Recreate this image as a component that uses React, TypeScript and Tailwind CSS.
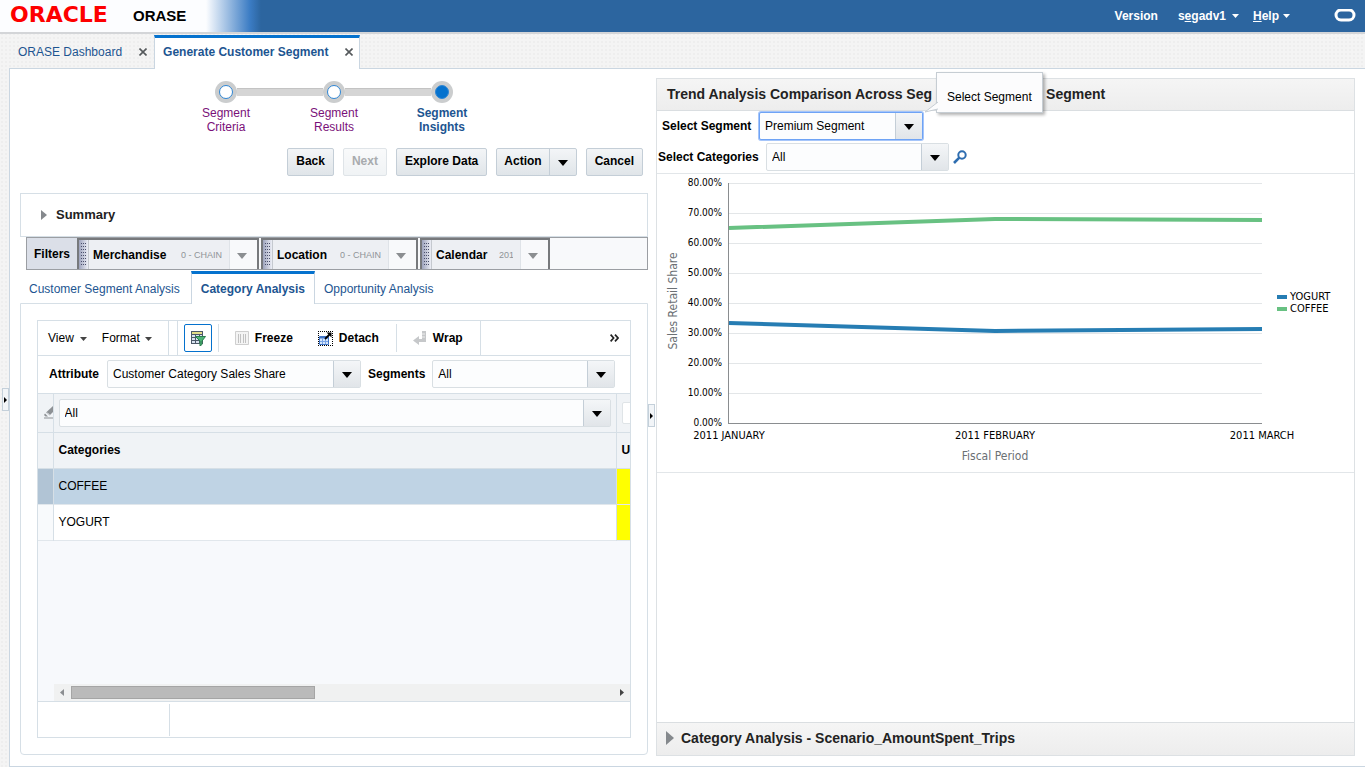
import type { ReactNode } from "react";
import clsx from "clsx";

const steps = [
  { label: ["Segment", "Criteria"], current: false },
  { label: ["Segment", "Results"], current: false },
  { label: ["Segment", "Insights"], current: true },
];

const filters = [
  { name: "Merchandise", value: "0 - CHAIN", width: "w-[182px]", clip: "" },
  { name: "Location", value: "0 - CHAIN", width: "w-[157px]", clip: "" },
  { name: "Calendar", value: "2011", width: "w-[130px]", clip: "w-[14px]" },
];

const rows = [
  { name: "COFFEE", selected: true },
  { name: "YOGURT", selected: false },
];

const series = [
  { name: "YOGURT", color: "#267db3", points: "72,149 338,157 605,155" },
  { name: "COFFEE", color: "#68c182", points: "72,54 338,45 605,46" },
];

const ticks = [80, 70, 60, 50, 40, 30, 20, 10, 0];

const months = [
  { x: 72, label: "2011 JANUARY" },
  { x: 338, label: "2011 FEBRUARY" },
  { x: 605, label: "2011 MARCH" },
];

const Caret = ({ className = "" }: { className?: string }) => (
  <svg
    width="10"
    height="6"
    viewBox="0 0 10 6"
    fill="currentColor"
    className={clsx("shrink-0", className)}
  >
    <path d="M0 0h10L5 6z" />
  </svg>
);

const SmallCaret = ({ className = "" }: { className?: string }) => (
  <svg
    width="7"
    height="4"
    viewBox="0 0 7 4"
    fill="currentColor"
    className={clsx("shrink-0", className)}
  >
    <path d="M0 0h7L3.5 4z" />
  </svg>
);

const RightArrow = ({ className = "" }: { className?: string }) => (
  <svg
    viewBox="0 0 6 10"
    fill="currentColor"
    preserveAspectRatio="none"
    className={clsx("shrink-0", className)}
  >
    <path d="M0 0l6 5-6 5z" />
  </svg>
);

type SelectProps = {
  id: string;
  value: string;
  className?: string;
  focused?: boolean;
  label?: string;
};

const Select = ({ id, value, className, focused, label }: SelectProps) => (
  <div
    className={clsx(
      "relative h-7 rounded-xs border bg-[#fcfdfe]",
      focused ? "border-[#6ea3f5] ring-1 ring-[#a5c5fa]" : "border-[#d9dfe3]",
      className
    )}
  >
    <select
      id={id}
      aria-label={label}
      className="block h-full w-full appearance-none bg-transparent pr-8 pl-[5px] outline-none"
    >
      <option>{value}</option>
    </select>
    <span className="pointer-events-none absolute inset-y-0 right-0 flex w-[27px] items-center justify-center border-l border-[#c4ced7] bg-linear-to-b from-[#f4f6f8] to-[#e1e5e9]">
      <Caret className="mt-0.5" />
    </span>
  </div>
);

const Button = ({
  children,
  disabled,
}: {
  children: ReactNode;
  disabled?: boolean;
}) => (
  <button
    disabled={disabled}
    className="h-7 rounded-xs border border-[#c4ced7] bg-linear-to-b from-[#f3f5f7] to-[#e0e5e9] px-2 pb-0.5 font-bold disabled:border-[#dfe4e8] disabled:from-[#f9fafb] disabled:to-[#f0f3f5] disabled:text-[#a8abae]"
  >
    {children}
  </button>
);

const Header = () => (
  <header className="flex h-[34px] items-center border-b-2 border-[#d3d5d8] bg-[linear-gradient(90deg,#fcfdff_0,#fcfdff_206px,#3b7cc4_250px,#2c659f_261px)] pr-[9px] pl-[10px] font-bold">
    <span className="w-[123px] pb-0.5 font-['DejaVu_Sans'] text-[22px] leading-none text-[#fe0000]">
      ORACLE
    </span>
    <h1 className="text-[15px]">ORASE</h1>
    <nav className="ml-auto flex items-center text-white">
      <a href="#version">Version</a>
      <button className="ml-5 flex items-center gap-1.5">
        <span>
          s<u>e</u>gadv1
        </span>
        <SmallCaret />
      </button>
      <button className="ml-[14px] flex items-center gap-1">
        <span>
          <u>H</u>elp
        </span>
        <SmallCaret />
      </button>
      <svg width="22" height="14" viewBox="0 0 22 14" className="ml-11">
        <rect
          x="2"
          y="1"
          width="18"
          height="10"
          rx="5"
          fill="none"
          stroke="white"
          strokeWidth="3"
        />
      </svg>
    </nav>
  </header>
);

const CloseIcon = () => (
  <svg width="8" height="8" viewBox="0 0 8 8" stroke="#55595c" strokeWidth="1.6">
    <path d="M.5.5l7 7M7.5.5l-7 7" />
  </svg>
);

const PageTabs = () => (
  <div className="relative z-10 -mb-px flex h-[35px] pt-px pl-[10px] text-[#1d5591]">
    <div className="flex items-center gap-[17px] pr-[7px] pl-2">
      <a href="#dashboard">ORASE Dashboard</a>
      <button aria-label="Close ORASE Dashboard">
        <CloseIcon />
      </button>
    </div>
    <div className="flex items-center gap-[17px] border-x border-t-3 border-x-[#cad6e1] border-t-[#0572ce] bg-white pr-1.5 pb-[3px] pl-2 font-bold">
      <a href="#segment">Generate Customer Segment</a>
      <button aria-label="Close Generate Customer Segment">
        <CloseIcon />
      </button>
    </div>
  </div>
);

const Train = () => (
  <ol className="flex justify-center pt-3 leading-[14px]">
    {steps.map((step, i) => (
      <li key={step.label[1]} className="w-[108px]">
        <div className="flex h-[22px] items-center">
          <span
            className={clsx(
              "h-2 flex-1",
              i > 0 && "border-t border-[#c3c3c3] bg-[#d5d5d5]"
            )}
          />
          <span className="flex size-[22px] items-center justify-center rounded-full bg-[#cbcdce]">
            <span
              className={clsx(
                "size-[14px] rounded-full border border-[#2f86d4]",
                step.current ? "bg-[#0572ce]" : "bg-white"
              )}
            />
          </span>
          <span
            className={clsx(
              "h-2 flex-1",
              i < steps.length - 1 && "border-t border-[#c3c3c3] bg-[#d5d5d5]"
            )}
          />
        </div>
        <a
          href={`#${step.label[1].toLowerCase()}`}
          className={clsx(
            "mt-[3px] block text-center",
            step.current ? "font-bold text-[#1d5591]" : "text-[#7a1079]"
          )}
        >
          {step.label[0]}
          <br />
          {step.label[1]}
        </a>
      </li>
    ))}
  </ol>
);

const Actions = () => (
  <div className="mt-[14px] mr-[5px] flex justify-end gap-[9px]">
    <Button>Back</Button>
    <Button disabled>Next</Button>
    <Button>Explore Data</Button>
    <div className="flex h-7 rounded-xs border border-[#c4ced7] bg-linear-to-b from-[#f3f5f7] to-[#e0e5e9] font-bold">
      <button className="px-[7px] pb-0.5">Action</button>
      <button
        aria-label="More actions"
        className="flex w-[27px] items-center justify-center border-l border-[#c4ced7]"
      >
        <Caret className="mt-0.5" />
      </button>
    </div>
    <Button>Cancel</Button>
  </div>
);

const Filters = () => (
  <div className="ml-1.5 flex h-[33px] gap-0.5 border border-[#9b9ea3] bg-[#f8f9fb]">
    <div className="-mr-0.5 flex w-[50px] items-center justify-center bg-[#dbdfe8] font-bold">
      Filters
    </div>
    {filters.map((filter) => (
      <div
        key={filter.name}
        className={clsx(
          "flex items-center border-x-2 border-t-2 border-[#77797c] bg-[#edeff3]",
          filter.width
        )}
      >
        <span className="mr-1 flex h-full w-[10px] items-center border-r border-[#c5c9cf] bg-linear-to-r from-[#9ea4bd] to-[#eceef5]">
          <svg width="8" height="24" viewBox="0 0 8 24">
            <defs>
              <pattern id="grip" width="2" height="3" patternUnits="userSpaceOnUse">
                <rect width="1" height="1" fill="#4b506c" />
              </pattern>
            </defs>
            <rect x="1" width="6" height="24" fill="url(#grip)" />
          </svg>
        </span>
        <b>{filter.name}</b>
        <span
          className={clsx(
            "mr-[7px] ml-auto overflow-hidden text-[9px] whitespace-nowrap text-[#8f9397]",
            filter.clip
          )}
        >
          {filter.value}
        </span>
        <button
          aria-label={`${filter.name} level`}
          className="flex h-full w-7 items-center border-l border-[#dfe3e8] bg-[#f8f9fb] pl-[7px] text-[#8b8e91]"
        >
          <Caret className="mt-0.5" />
        </button>
      </div>
    ))}
  </div>
);

const QueryIcon = () => (
  <svg width="16" height="16" viewBox="0 0 16 16">
    <path d="M1 1h12v13H1z" fill="#4c5868" />
    <path d="M2 2h10v2H2z" fill="#e3dc88" />
    <path
      d="M2 5h3v2H2zM6 5h3v2H6zM10 5h2v2h-2zM2 8h3v2H2zM6 8h3v2H6zM2 11h3v2H2zM6 11h3v2H6z"
      fill="#d9e2ef"
    />
    <path d="M5.5 6.5h10L12 11v3.5l-2 1.5v-5z" fill="#4fb477" stroke="#2b7d4d" />
  </svg>
);

const FreezeIcon = () => (
  <svg width="14" height="14" viewBox="0 0 14 14">
    <path d="M.5.5h13v13H.5z" fill="#f4f4f4" stroke="#cfcfcf" />
    <path d="M3.5 3v9M5.5 3v9M8.5 3v9M10.5 3v9" stroke="#c2c2c2" />
  </svg>
);

const DetachIcon = () => (
  <svg width="15" height="15" viewBox="0 0 15 15">
    <path
      d="M0 .5h15M0 14.5h15M.5 0v15M14.5 0v15"
      stroke="#000"
      strokeDasharray="1 1"
    />
    <path d="M1.5 5.5h9v8h-9z" fill="#d5e6fb" stroke="#3f74c8" />
    <path d="M2 6h8v1.5H2z" fill="#3f74c8" />
    <path d="M4.5 7v6M7.5 7v6M2 10.5h8" stroke="#7ba5e6" />
    <path d="M7 8l5-5" stroke="#000" strokeWidth="1.8" />
    <path d="M8.5 1.5h5v5z" />
  </svg>
);

const WrapIcon = () => (
  <svg width="14" height="14" viewBox="0 0 14 14" fill="#c6c8ca">
    <path d="M9 0h4v11H6v3L0 9.5 6 5v3h3z" />
    <path d="M9 3h3M9 6h3" stroke="#eee" />
  </svg>
);

const ClearIcon = () => (
  <svg width="9" height="13" viewBox="0 0 9 13" className="block">
    <path d="M9 0v6L5.5 9.5 2 6.5z" fill="#8d9195" />
    <path d="M1 7.5l3 3H1.5L0 9z" fill="#8d9195" />
    <path d="M3 6.5l3 3" stroke="#eff2f5" />
    <path d="M0 12h9" stroke="#8d9195" />
  </svg>
);

const Toolbar = () => (
  <div className="flex h-[35px] items-center border-b border-[#d6dfe6]">
    <button className="ml-[10px] flex items-center gap-1.5">
      View <SmallCaret className="mt-0.5 text-[#444]" />
    </button>
    <button className="mr-4 ml-[15px] flex items-center gap-[5px]">
      Format <SmallCaret className="mt-0.5 text-[#444]" />
    </button>
    <span className="mr-1.5 h-full w-[10px] border-x border-[#d6dfe6]" />
    <button
      aria-label="Query by example"
      aria-pressed="true"
      className="flex size-7 items-center justify-center rounded-xs border border-[#0572ce]"
    >
      <QueryIcon />
    </button>
    <span className="ml-1.5 h-7 border-l border-[#d6dfe6]" />
    <button className="ml-4 flex items-center gap-1.5 font-bold">
      <FreezeIcon /> Freeze
    </button>
    <button className="ml-[25px] flex items-center gap-1.5 font-bold">
      <DetachIcon /> Detach
    </button>
    <span className="ml-[17px] h-7 border-l border-[#d6dfe6]" />
    <button className="ml-4 flex items-center gap-1.5 font-bold">
      <WrapIcon /> Wrap
    </button>
    <span className="ml-[17px] h-full border-l border-[#d6dfe6]" />
    <button aria-label="More tools" className="mr-[11px] ml-auto">
      <svg
        width="9"
        height="8"
        viewBox="0 0 9 8"
        fill="none"
        stroke="#222"
        strokeWidth="1.7"
      >
        <path d="M.6.6L3.6 4l-3 3.4M5 .6L8 4 5 7.4" />
      </svg>
    </button>
  </div>
);

const CategoryTable = () => (
  <table className="w-full table-fixed border-collapse text-left">
    <colgroup>
      <col className="w-[15px]" />
      <col />
      <col className="w-[14px]" />
    </colgroup>
    <thead className="bg-[#f0f3f6]">
      <tr className="h-[38px] border-b border-[#d6dfe6]">
        <td className="overflow-hidden border-r border-[#d6dfe6] pl-1.5">
          <ClearIcon />
        </td>
        <td className="border-r border-[#d6dfe6] px-[5px]">
          <Select id="category-filter" label="Filter categories" value="All" />
        </td>
        <td className="overflow-hidden pl-[5px]">
          <input
            aria-label="Filter"
            className="block h-[22px] w-20 rounded-xs border border-[#dfe4e7] bg-white"
          />
        </td>
      </tr>
      <tr className="h-9 border-b border-[#d6dfe6]">
        <td className="border-r border-[#d6dfe6]" />
        <th className="border-r border-[#d6dfe6] px-[5px]">Categories</th>
        <th className="overflow-hidden pl-[5px]">U</th>
      </tr>
    </thead>
    <tbody>
      {rows.map((row) => (
        <tr
          key={row.name}
          className={clsx(
            "h-9 border-b border-[#e1e7ec]",
            row.selected ? "bg-[#bfd3e4]" : "bg-white"
          )}
        >
          <td
            className={clsx(
              "border-r border-[#d6dfe6]",
              row.selected ? "bg-[#b1c4d5]" : "bg-[#f8fafc]"
            )}
          />
          <td className="border-r border-[#d6dfe6] px-[5px]">{row.name}</td>
          <td className="bg-[#ffff00]" />
        </tr>
      ))}
    </tbody>
  </table>
);

const LeftPane = () => (
  <section className="flex min-w-0 flex-col pb-[11px] pl-[10px]">
    <Train />
    <Actions />
    <div className="mt-[17px] flex h-11 items-center gap-[9px] border border-[#d6dfe6] pl-5">
      <RightArrow className="h-[10px] w-1.5 text-[#85898d]" />
      <h2 className="text-[13px] font-bold text-[#222]">Summary</h2>
    </div>
    <Filters />
    <div className="relative z-10 mt-px -mb-px flex h-[33px] text-[#1d5591]">
      <a href="#customer" className="flex items-center pt-0.5 pr-[11px] pl-[9px]">
        Customer Segment Analysis
      </a>
      <a
        href="#category"
        className="flex items-center border-x border-t-3 border-x-[#cad6e1] border-t-[#0572ce] bg-white px-[9px] font-bold"
      >
        Category Analysis
      </a>
      <a href="#opportunity" className="flex items-center px-[9px] pt-0.5">
        Opportunity Analysis
      </a>
    </div>
    <div className="flex flex-1 flex-col rounded-b border border-[#d6dfe6] p-4">
      <div className="flex flex-1 flex-col border border-[#d6dfe6]">
        <Toolbar />
        <div className="flex h-[38px] items-center border-b border-[#d6dfe6] pb-px pl-[11px] font-bold">
          <label htmlFor="attribute">Attribute</label>
          <Select
            id="attribute"
            value="Customer Category Sales Share"
            className="mr-[7px] ml-2 w-[254px] font-normal"
          />
          <label htmlFor="segments">Segments</label>
          <Select id="segments" value="All" className="ml-[7px] w-[183px] font-normal" />
        </div>
        <div className="flex flex-1 flex-col bg-[#f7f9fc]">
          <CategoryTable />
          <div className="mt-auto ml-4 flex h-[17px] items-center bg-[#f0f1f1] px-1.5">
            <RightArrow className="h-[7px] w-1 rotate-180 text-[#8b8e91]" />
            <div className="mx-[7px] flex-1">
              <div className="h-[13px] w-[45%] border border-[#a5a5a5] bg-[#bababa]" />
            </div>
            <RightArrow className="h-[7px] w-1 text-[#444]" />
          </div>
        </div>
        <div className="h-9 border-t border-[#d6dfe6] pt-0.5">
          <div className="h-8 w-[132px] border-r border-[#d6dfe6]" />
        </div>
      </div>
    </div>
  </section>
);

const TrendChart = () => (
  <svg
    viewBox="0 0 697 298"
    className="block w-full font-['DejaVu_Sans_Condensed','Noto_Sans',sans-serif]"
  >
    {ticks.map((tick, i) => (
      <g key={tick}>
        <path
          d={`M72 ${9.5 + i * 30}H605`}
          stroke={tick === 0 ? "#8a8d90" : "#e3e6e8"}
        />
        <text x="65" y={12 + i * 30} textAnchor="end" className="text-[10px]">
          {tick.toFixed(2)}%
        </text>
      </g>
    ))}
    <path d="M71.5 9v241" stroke="#8a8d90" />
    {series.map((line) => (
      <polyline
        key={line.name}
        points={line.points}
        fill="none"
        stroke={line.color}
        strokeWidth="4"
      />
    ))}
    <g className="text-[11px]" textAnchor="middle">
      {months.map((month) => (
        <text key={month.label} x={month.x} y="265">
          {month.label}
        </text>
      ))}
    </g>
    <g className="fill-[#6b7074] text-xs" textAnchor="middle">
      <text x="338" y="286">
        Fiscal Period
      </text>
      <text transform="translate(20 127) rotate(-90)">Sales Retail Share</text>
    </g>
    {series.map((line, i) => (
      <g key={line.name}>
        <rect x="620" y={121 + i * 12} width="10" height="4" fill={line.color} />
        <text x="633" y={126 + i * 12} className="text-[11px]">
          {line.name}
        </text>
      </g>
    ))}
  </svg>
);

const Tooltip = () => (
  <div
    role="tooltip"
    className="absolute -top-10 left-[177px] z-20 border border-[#c6cdd3] bg-[#fcfcfd] px-[10px] pt-4 pb-[7px] leading-4 whitespace-nowrap shadow-[2px_2px_3px_rgba(0,0,0,0.3)]"
  >
    Select Segment
    <svg
      width="14"
      height="13"
      viewBox="0 0 14 13"
      className="absolute -bottom-px -left-[13px]"
    >
      <path d="M14 2L1 12l13-3" fill="#fcfcfd" stroke="#c6cdd3" />
    </svg>
  </div>
);

const RightPane = () => (
  <section className="mt-[9px] mr-[10px] mb-[10px] flex min-w-0 flex-col border border-[#dde1e4]">
    <h2 className="flex h-8 items-center gap-[114px] border-b border-[#dadee1] bg-linear-to-b from-[#f5f5f5] to-[#ededed] pb-px pl-[10px] text-sm font-bold text-[#222]">
      <span>Trend Analysis Comparison Across Seg</span>
      <span>Segment</span>
    </h2>
    <div className="flex h-[30px] items-center pl-[5px]">
      <label htmlFor="segment" className="w-[97px] font-bold">
        Select Segment
      </label>
      <div className="relative">
        <Select id="segment" value="Premium Segment" className="w-[164px]" focused />
        <Tooltip />
      </div>
    </div>
    <div className="flex h-8 items-center">
      <label htmlFor="categories" className="w-[109px] pl-px font-bold">
        Select Categories
      </label>
      <Select id="categories" value="All" className="w-[183px]" />
      <button aria-label="Search categories" className="ml-1">
        <svg
          width="14"
          height="14"
          viewBox="0 0 14 14"
          fill="none"
          stroke="#2e6db0"
          strokeWidth="2"
        >
          <circle cx="9" cy="5" r="3.7" />
          <path d="M6.300 7.700L1 13" strokeWidth="2.600" />
        </svg>
      </button>
    </div>
    <div className="border-y border-[#e2e6e9]">
      <TrendChart />
    </div>
    <button className="mt-auto flex h-[33px] items-center gap-[7px] border-t border-[#dadee1] bg-linear-to-b from-[#f5f5f5] to-[#ededed] pb-0.5 pl-[9px] text-sm font-bold text-[#222]">
      <RightArrow className="h-[14px] w-2 text-[#85898d]" />
      Category Analysis - Scenario_AmountSpent_Trips
    </button>
  </section>
);

const Handle = ({ label }: { label: string }) => (
  <button
    aria-label={label}
    className="flex h-[23px] w-[7px] items-center justify-center border border-[#c4d0da] bg-[#f2f5f8]"
  >
    <RightArrow className="h-1.5 w-[3px]" />
  </button>
);

export default function App() {
  return (
    <div className="flex min-h-screen flex-col bg-[#f4f4f4] bg-[radial-gradient(#eeeeee_1px,transparent_1px)] bg-[size:4px_4px] font-['Liberation_Sans',Arial,sans-serif] text-xs text-black">
      <Header />
      <PageTabs />
      <div className="flex flex-1">
        <div className="flex w-[9px] justify-end pt-80">
          <Handle label="Expand regional area" />
        </div>
        <main className="grid flex-1 grid-cols-[638fr_8px_709fr] border-y border-l border-[#cad6e1] bg-white">
          <LeftPane />
          <div className="pt-[335px]">
            <Handle label="Resize panes" />
          </div>
          <RightPane />
        </main>
      </div>
    </div>
  );
}
